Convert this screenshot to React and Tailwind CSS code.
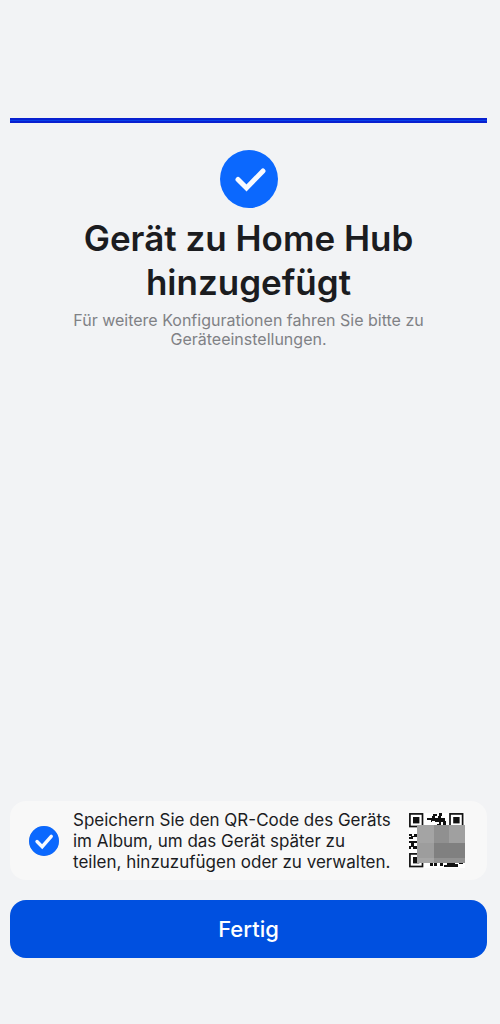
function CheckMark({ className, d, width }) {
  return (
    <svg viewBox="0 0 58 58" className={className} aria-hidden="true">
      <circle cx="29" cy="29" r="29" fill="#0b68fe" />
      <path d={d} fill="none" stroke="#f8faff" strokeWidth={width} strokeLinecap="round" strokeLinejoin="miter" />
    </svg>
  );
}

function QrCode() {
  return (
    <svg viewBox="0 0 56 55" className="h-[55px] w-[56px] shrink-0" role="img" aria-label="QR-Code">
      <rect width="56" height="55" fill="#fff" />
      <g fill="none" stroke="#111" strokeWidth="1.7">
        <rect x="0.9" y="0.9" width="12.6" height="12.6" />
        <rect x="41" y="0.9" width="12.6" height="12.6" />
        <rect x="0.9" y="40.9" width="12.6" height="12.6" />
      </g>
      <g fill="#111">
        <rect x="4" y="4" width="6.4" height="6.4" />
        <rect x="44.2" y="4" width="6.4" height="6.4" />
        <rect x="4" y="44" width="6.4" height="6.4" />
        <path d="M24 1H28V3H26V5H29V3H30V0H33V3H32V5H36V8H37V13H34V9H32V13H28V11H30V9H26V8H23V9H22V7H18V5H23V3H24z" />
        <path d="M0 21h3v2h2v-2h3v3h-4v2h-4v-2h2v-1h-2zM0 28h8v2h-3v3h3v3h-4v-2h-2v2h-2v-3h2v-3h-2z" />
        <path d="M21 50h3v3h-3zM25 50h3v3h-3zM31 50h3v3h-3zM38 50h8v1h3v3h-14v-2h3zM50 50h4v1h-4z" />
      </g>
      <g shapeRendering="crispEdges">
        <rect x="8" y="12" width="17" height="18" fill="#a4a4a4" />
        <rect x="25" y="12" width="15" height="18" fill="#909090" />
        <rect x="40" y="12" width="16" height="18" fill="#a0a0a0" />
        <rect x="8" y="30" width="17" height="15" fill="#9d9d9d" />
        <rect x="25" y="30" width="31" height="15" fill="#808080" />
        <rect x="8" y="45" width="17" height="5" fill="#a6a6a6" />
        <rect x="25" y="45" width="31" height="5" fill="#929292" />
      </g>
    </svg>
  );
}

export default function App() {
  return (
    <div className="flex min-h-screen flex-col bg-[#f2f3f5] pt-[118px] pr-[13px] pb-[66px] pl-[10px] font-['Inter',sans-serif] text-[#1b1c1f]">
      <div className="h-[5px] border-y-2 border-[#0820d0] bg-[#0840e8]" />
      <main className="flex flex-col items-center pt-[27px] text-center">
        <CheckMark className="size-[58px]" d="M18 29.5L26.5 38L43 21" width="5" />
        <h1 className="mt-2 max-w-[360px] text-[35px] leading-[44px] font-semibold">
          Gerät zu Home Hub hinzugefügt
        </h1>
        <p className="mt-[7px] max-w-[370px] text-[16px] leading-[19px] text-[#808185]">
          Für weitere Konfigurationen fahren Sie bitte zu Geräteeinstellungen.
        </p>
      </main>
      <footer className="mt-auto flex flex-col gap-5">
        <div className="flex items-center rounded-2xl bg-[#f8f8f8] py-[7px] pr-[22px] pl-[19px]">
          <label className="flex flex-1 cursor-pointer items-center gap-[14px]">
            <span className="grid size-[30px] shrink-0 place-items-center">
              <input type="checkbox" defaultChecked className="peer col-start-1 row-start-1 size-[30px] appearance-none rounded-full border border-gray-400" />
              <CheckMark className="pointer-events-none invisible col-start-1 row-start-1 size-[30px] peer-checked:visible" d="M15.5 30L25.5 40L43 20" width="6.5" />
            </span>
            <span className="max-w-[325px] pt-0.5 text-[17px] leading-[21px]">
              Speichern Sie den QR-Code des Geräts im Album, um das Gerät später zu teilen, hinzuzufügen oder zu verwalten.
            </span>
          </label>
          <QrCode />
        </div>
        <button type="button" className="h-[58px] rounded-2xl bg-[#0050e0] text-[22px] font-medium text-white">
          Fertig
        </button>
      </footer>
    </div>
  );
}
